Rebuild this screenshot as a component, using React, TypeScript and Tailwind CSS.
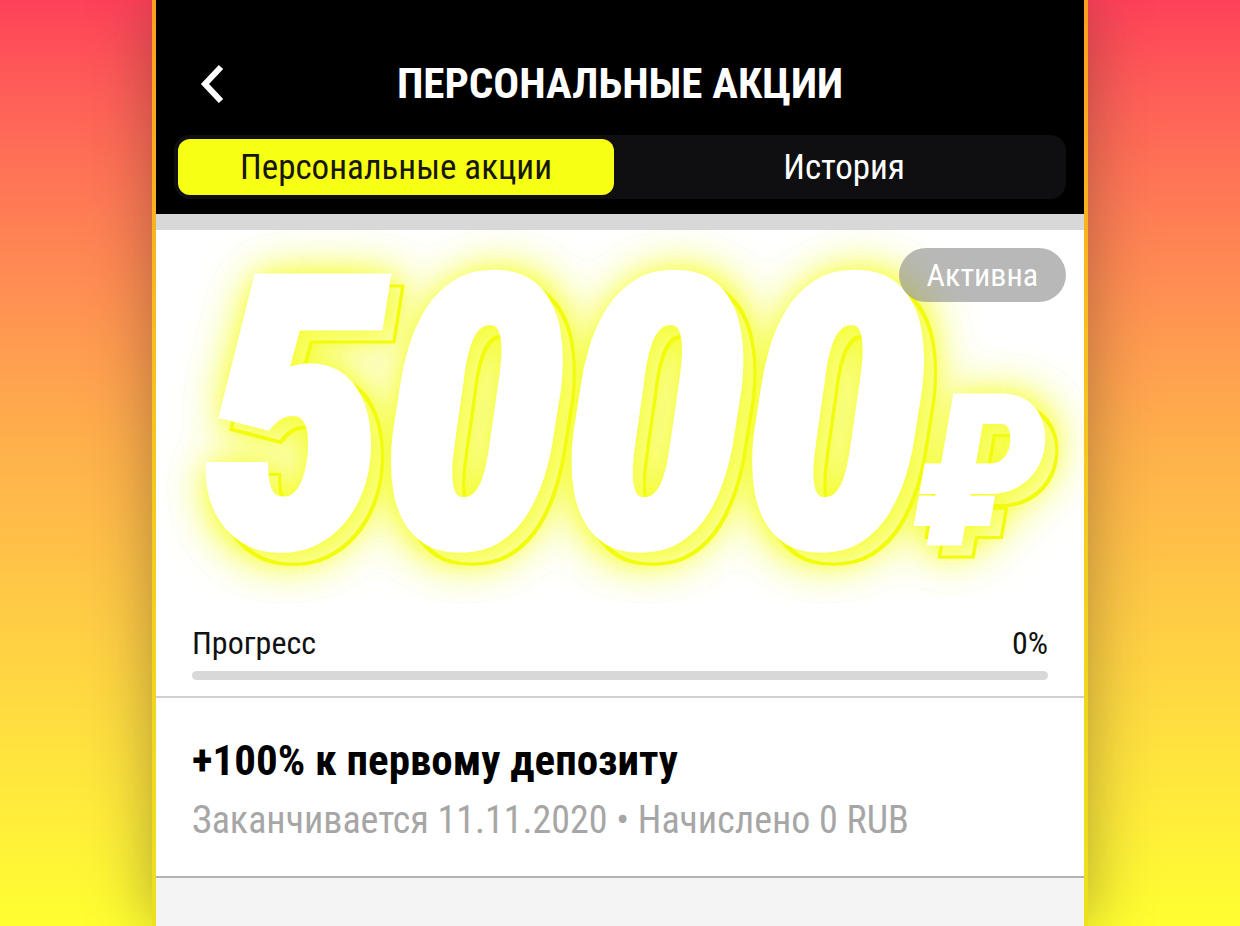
import { ReactNode } from "react";

function Banner() {
  return (
    <svg viewBox="0 0 928 373" className="block w-full overflow-hidden">
      <defs>
        {/* white face, an outlined copy behind it and a wide neon glow */}
        <filter id="neon" filterUnits="userSpaceOnUse" x="0" y="0" width="928" height="373" colorInterpolationFilters="sRGB">
          <feOffset in="SourceAlpha" dx="12" dy="12" result="back" />
          <feMorphology in="back" operator="dilate" radius="1" result="outer" />
          <feMorphology in="back" operator="erode" radius="2" result="core" />
          <feComposite in="outer" in2="core" operator="out" result="rim" />
          <feOffset in="SourceAlpha" dx="5" dy="5" result="middle" />
          <feGaussianBlur in="middle" stdDeviation="25" result="wide" />
          <feGaussianBlur in="middle" stdDeviation="12" result="near" />

          <feFlood floodColor="#f4fd20" floodOpacity="0.7" />
          <feComposite in2="wide" operator="in" result="wideGlow" />
          <feFlood floodColor="#fcffa8" floodOpacity="0.6" />
          <feComposite in2="core" operator="in" result="coreFill" />
          <feFlood floodColor="#f5ff14" floodOpacity="0.7" />
          <feComposite in2="near" operator="in" result="nearGlow" />
          <feFlood floodColor="#f2fb0c" />
          <feComposite in2="rim" operator="in" result="rimFill" />

          <feMerge>
            <feMergeNode in="wideGlow" />
            <feMergeNode in="wideGlow" />
            <feMergeNode in="coreFill" />
            <feMergeNode in="nearGlow" />
            <feMergeNode in="rimFill" />
            <feMergeNode in="SourceGraphic" />
          </feMerge>
        </filter>
      </defs>
      <g filter="url(#neon)" className="fill-white stroke-white font-['Roboto_Condensed',Roboto,sans-serif] font-bold italic">
        <text x="46" y="312" fontSize="368" strokeWidth="14">
          5000
        </text>
        <text x="762" y="313" fontSize="206" strokeWidth="6">
          ₽
        </text>
      </g>
    </svg>
  );
}

function Tab({ active, children }: { active?: boolean; children: ReactNode }) {
  return (
    <button
      type="button"
      role="tab"
      aria-selected={active ? true : false}
      className={`h-14 rounded-xl text-[35px] leading-none ${
        active ? "bg-[#f7ff14] text-[#16160a]" : "text-white"
      }`}
    >
      {children}
    </button>
  );
}

export default function App() {
  return (
    <div className="flex min-h-screen overflow-hidden bg-linear-to-b from-[#ff4059] via-[#ffb04b] via-48% to-[#ffff30] px-38 font-['Roboto_Condensed',Roboto,sans-serif]">
      <div className="flex grow bg-linear-to-b from-[#fb9f1e] via-[#f3c51f] via-45% to-[#eee21c] px-1 shadow-[0_0_60px_rgba(60,40,30,0.4)]">
        <main className="flex grow flex-col bg-[#f4f4f4]">
          <header className="bg-black px-[18px] pt-13 pb-[15px] text-white">
            <div className="grid h-[62px] grid-cols-[64px_1fr_64px] items-center">
              <button type="button" aria-label="Назад" className="pl-6">
                <svg viewBox="0 0 26 40" className="h-10 w-[26px] fill-none stroke-white" strokeWidth="6">
                  <path d="M23 4 7 21 23 38" />
                </svg>
              </button>
              <h1 className="text-center text-[43px] leading-none font-bold">ПЕРСОНАЛЬНЫЕ АКЦИИ</h1>
            </div>
            <div role="tablist" className="mt-[21px] grid grid-cols-2 gap-3 rounded-2xl bg-[#0f0f11] p-1">
              <Tab active>Персональные акции</Tab>
              <Tab>История</Tab>
            </div>
          </header>

          <div className="h-4 bg-[#d8d8d8]" />

          <article className="border-b-2 border-[#b2b2b2] bg-white">
            <div className="relative">
              <Banner />
              <span className="absolute top-[18px] right-[18px] flex h-[54px] items-center rounded-full bg-[#929292]/65 px-7 text-[32px] leading-none text-white">
                Активна
              </span>
            </div>

            <section className="border-b-2 border-[#d0d0d0] px-9 pt-4 pb-4">
              <div className="flex items-center justify-between text-[32px] leading-12 text-[#111111]">
                <span id="progress-label">Прогресс</span>
                <span>0%</span>
              </div>
              <div
                role="progressbar"
                aria-labelledby="progress-label"
                aria-valuenow={0}
                aria-valuemin={0}
                aria-valuemax={100}
                className="mt-1 h-[9px] rounded-full bg-[#d8d8d8]"
              />
            </section>

            <section className="px-9 pt-8 pb-[26px]">
              <h2 className="text-[43px] leading-15 font-bold text-black">+100% к первому депозиту</h2>
              <p className="text-[38px] leading-15 text-[#a6a6a6]">Заканчивается 11.11.2020 • Начислено 0 RUB</p>
            </section>
          </article>
        </main>
      </div>
    </div>
  );
}
